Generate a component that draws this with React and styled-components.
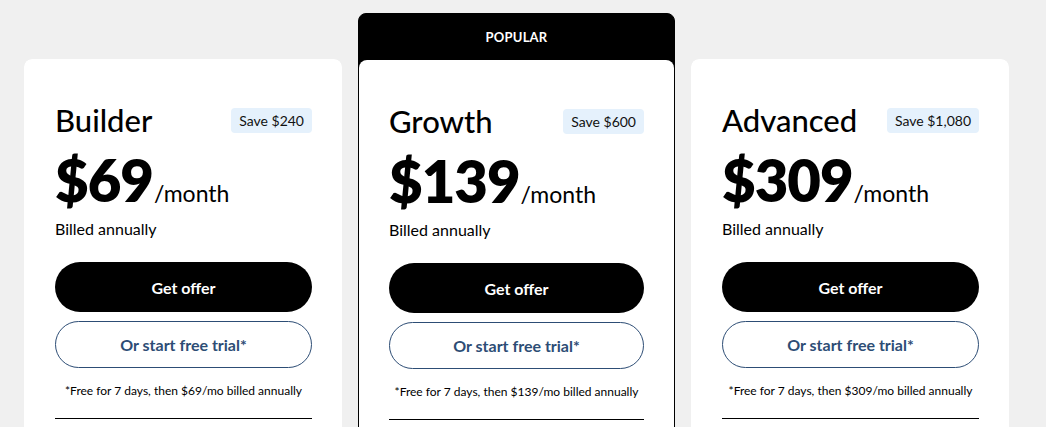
import React from 'react'
import styled, { createGlobalStyle } from 'styled-components'

const GlobalStyle = createGlobalStyle`
  html, body {
    margin: 0;
    padding: 0;
    background: #f0f0f0;
    font-family: Lato, "Liberation Sans", sans-serif;
    color: #000;
    overflow: hidden;
  }
`;

const plans = [
  { name: 'Builder', save: 'Save $240', price: 69 },
  { name: 'Growth', save: 'Save $600', price: 139, popular: true },
  { name: 'Advanced', save: 'Save $1,080', price: 309 },
];

const Page = styled.div`
  display: flex;
  align-items: flex-start;
  gap: 16px;
  padding: 13px 0 0 24px;
  height: 427px;
  box-sizing: border-box;
`;

const Column = styled.div`
  width: ${({ $popular }) => ($popular ? '317px' : '318px')};
  flex-shrink: 0;
  box-sizing: border-box;
  border-radius: 8px;
  margin-top: ${({ $popular }) => ($popular ? '0' : '46px')};
  background: ${({ $popular }) => ($popular ? '#000' : 'transparent')};
  border: ${({ $popular }) => ($popular ? '1px solid #000' : 'none')};
  overflow: hidden;
`;

const Banner = styled.div`
  height: 46px;
  display: flex;
  align-items: center;
  justify-content: center;
  color: #fff;
  font-size: 13px;
  font-weight: 700;
  letter-spacing: 0.2px;
`;

const Card = styled.div`
  background: #fff;
  border-radius: 8px;
  padding: 43px 30px 0 ${({ $popular }) => ($popular ? '30px' : '31px')};
  height: 400px;
  box-sizing: border-box;
`;

const TitleRow = styled.div`
  display: flex;
  align-items: center;
  justify-content: space-between;
`;

const Title = styled.h2`
  margin: 0;
  font-size: 31px;
  font-weight: 500;
  line-height: 36px;
`;

const Badge = styled.span`
  background: #e5f1fc;
  border-radius: 4px;
  font-size: 14px;
  padding: 4px 8px;
  line-height: 17px;
  color: #111;
`;

const PriceRow = styled.div`
  display: flex;
  align-items: baseline;
  margin-top: 16px;
  line-height: 52px;
`;

const Amount = styled.span`
  font-size: 58px;
  font-weight: 800;
  letter-spacing: -1px;
`;

const Per = styled.span`
  font-size: 23px;
  margin-left: 1px;
`;

const Billed = styled.div`
  font-size: 16px;
  margin-top: 0;
  line-height: 20px;
`;

const Primary = styled.button`
  display: block;
  width: 100%;
  height: 50px;
  margin-top: 23px;
  border: none;
  border-radius: 25px;
  background: #000;
  color: #fff;
  font-family: inherit;
  font-size: 16px;
  font-weight: 700;
  cursor: pointer;
`;

const Secondary = styled.button`
  display: block;
  width: 100%;
  height: 47px;
  margin-top: 9px;
  border: 1px solid #2d4d75;
  border-radius: 24px;
  background: #fff;
  color: #2d4d75;
  font-family: inherit;
  font-size: 16px;
  font-weight: 700;
  cursor: pointer;
`;

const Note = styled.p`
  margin: 15px 0 0;
  text-align: center;
  font-size: 12px;
  line-height: 16px;
`;

const Rule = styled.hr`
  margin: 19px 0 0;
  border: none;
  border-top: 1px solid #000;
`;

function Plan({ name, save, price, popular }) {
  return (
    <Column $popular={popular}>
      {popular && <Banner>POPULAR</Banner>}
      <Card $popular={popular}>
        <TitleRow>
          <Title>{name}</Title>
          <Badge>{save}</Badge>
        </TitleRow>
        <PriceRow>
          <Amount>${price}</Amount>
          <Per>/month</Per>
        </PriceRow>
        <Billed>Billed annually</Billed>
        <Primary>Get offer</Primary>
        <Secondary>Or start free trial*</Secondary>
        <Note>*Free for 7 days, then ${price}/mo billed annually</Note>
        <Rule />
      </Card>
    </Column>
  )
}

export default function App() {
  return (
    <>
      <GlobalStyle />
      <Page>
        {plans.map((p) => (
          <Plan key={p.name} {...p} />
        ))}
      </Page>
    </>
  )
}
